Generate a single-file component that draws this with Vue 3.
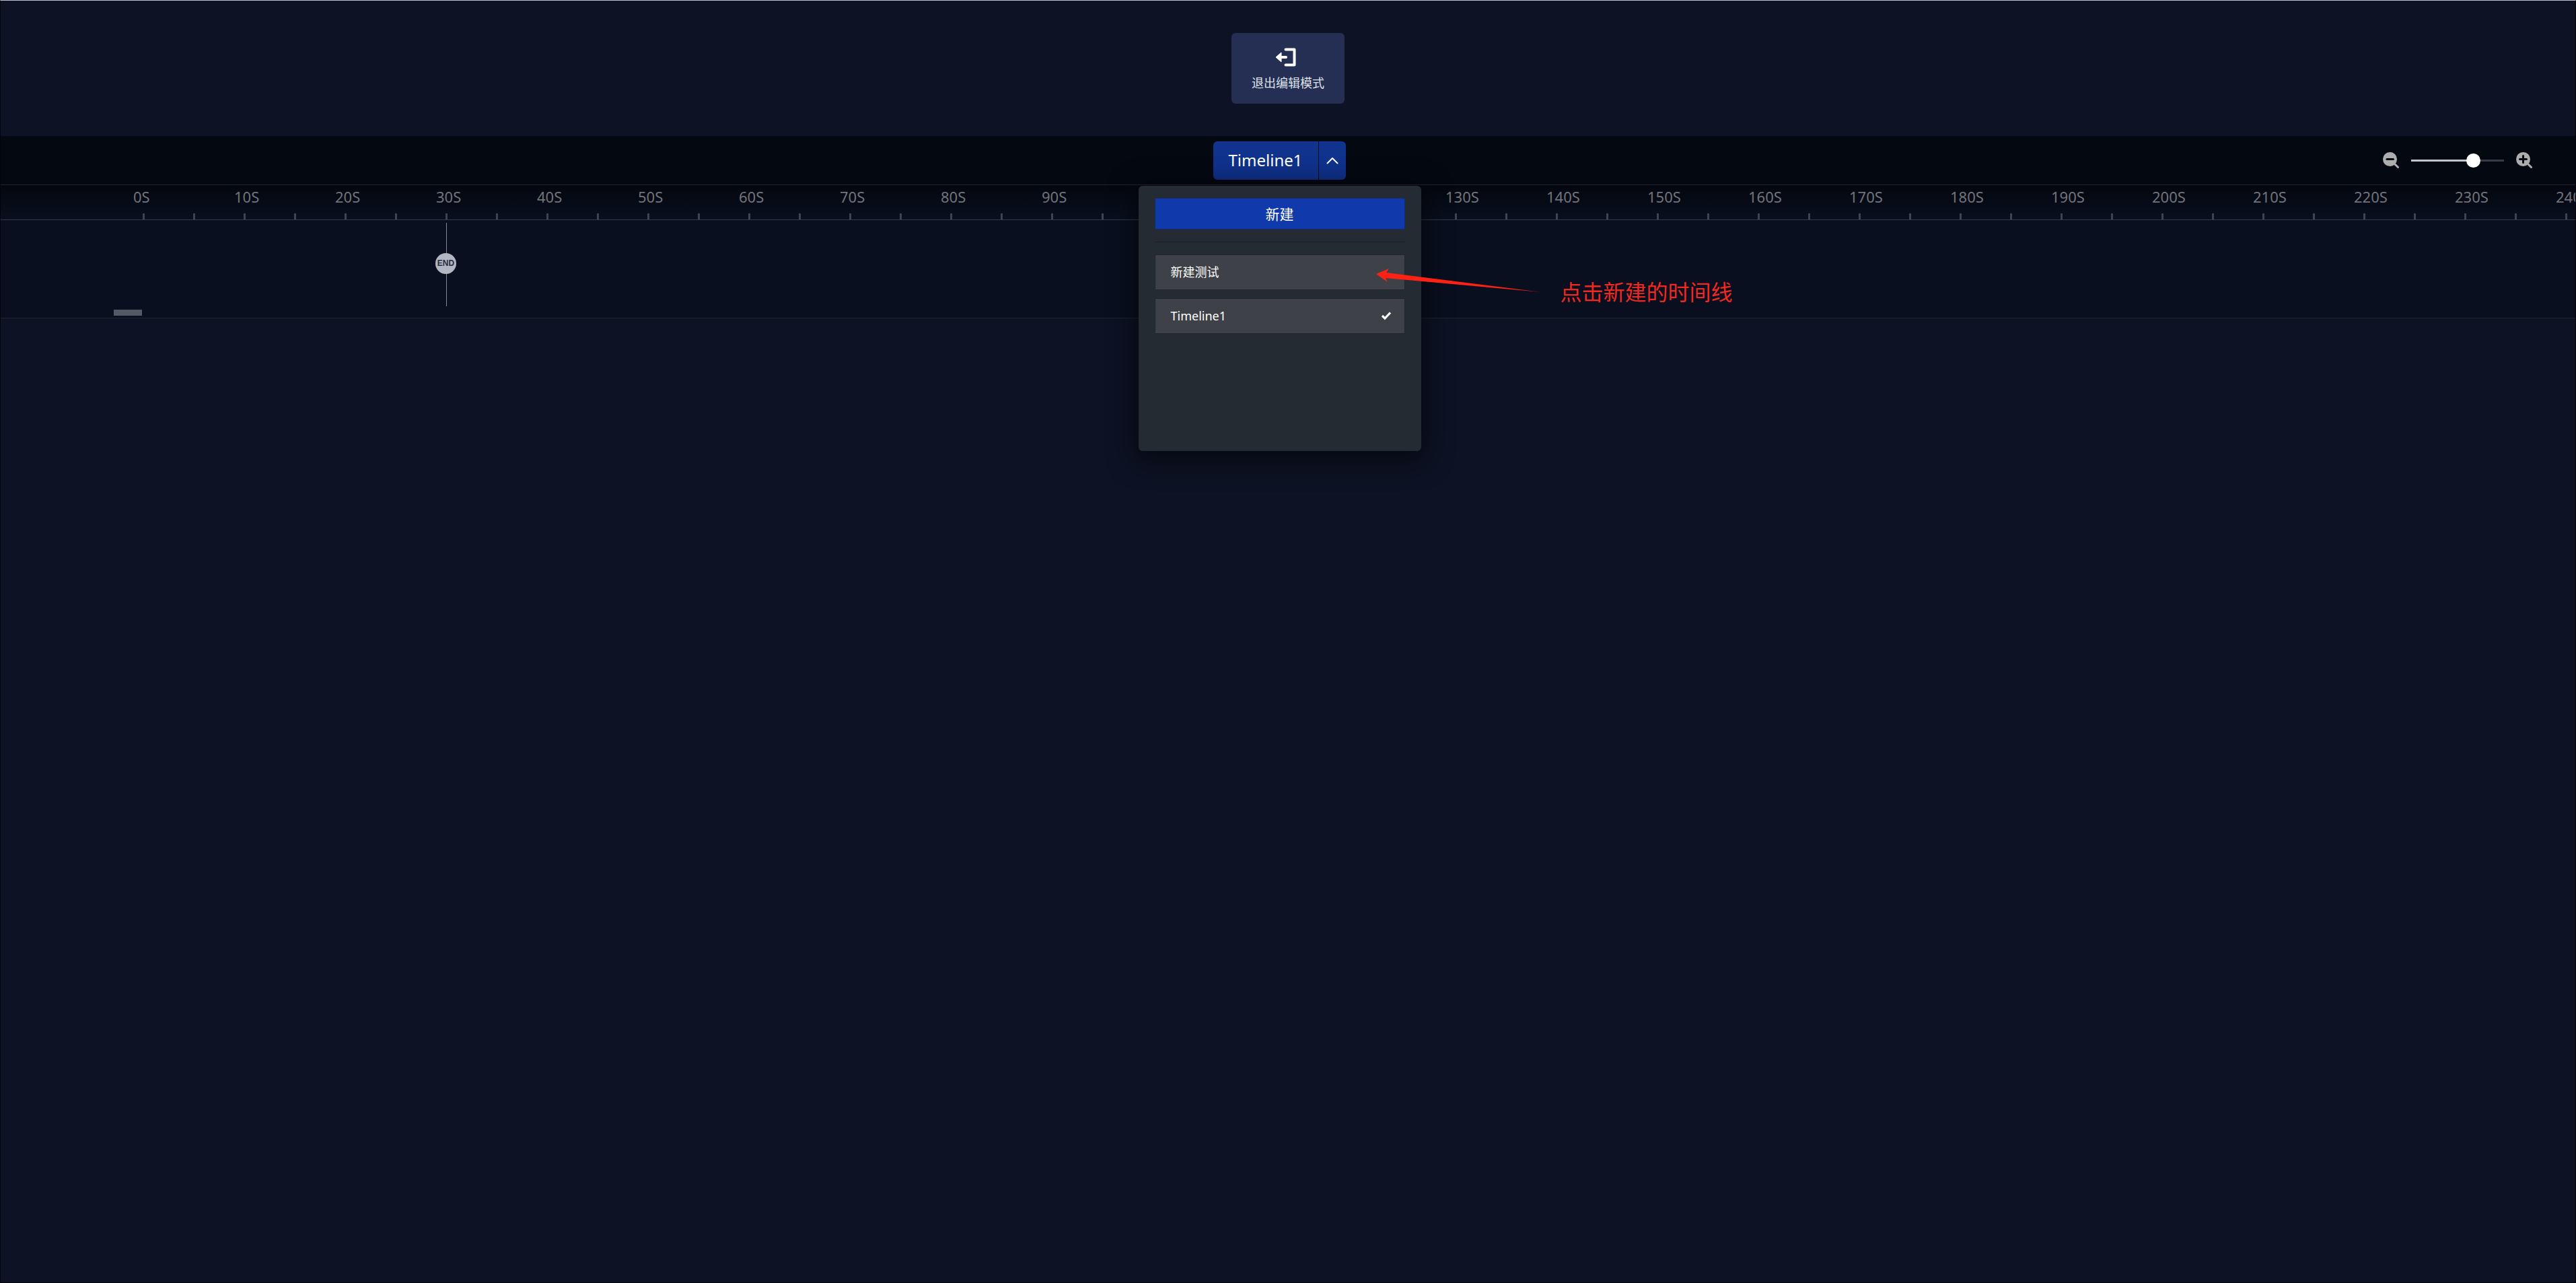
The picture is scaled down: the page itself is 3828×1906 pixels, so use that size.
<script setup>
import { ref } from 'vue'

const SECOND_WIDTH = 15
const zoom = ref(70)
const open = ref(true)
const marks = Array.from({ length: 25 }, (_, i) => i * 10)
const timelines = ['新建测试', 'Timeline1']
const current = ref('Timeline1')
const endTime = 30
</script>

<template>
  <div class="page">
    <header class="header">
      <button type="button" class="exit">
        <svg width="32" height="30" viewBox="0 0 32 30" fill="none" aria-hidden="true">
          <path d="M15.500 3.500H28.500V26.500H15.500" stroke="#fff" stroke-width="4" stroke-linecap="round" stroke-linejoin="round" />
          <path d="M9 15H16" stroke="#fff" stroke-width="4" stroke-linecap="round" />
          <path d="M1 15L9 8V22Z" fill="#fff" stroke="#fff" stroke-linejoin="round" />
        </svg>
        <span>退出编辑模式</span>
      </button>
    </header>

    <section class="toolbar">
      <div class="picker">
        <button type="button" class="name">{{ current }}</button>
        <button type="button" class="toggle" aria-label="Timelines" :aria-expanded="open" @click="open = !open">
          <svg width="18" height="11" viewBox="0 0 18 11" fill="none" aria-hidden="true">
            <path d="M1.500 9.500L9 2L16.500 9.500" stroke="#fff" stroke-width="2" stroke-linecap="round" stroke-linejoin="round" />
          </svg>
        </button>

        <div v-if="open" class="menu">
          <button type="button" class="create">新建</button>
          <hr class="rule" />
          <ul class="list">
            <li v-for="name in timelines" :key="name">
              <button type="button" class="item" @click="current = name">
                <span>{{ name }}</span>
                <svg v-if="name === current" width="16" height="14" viewBox="0 0 16 14" fill="none" aria-hidden="true">
                  <path d="M2 7L6 11L14 2.500" stroke="#fff" stroke-width="3.200" />
                </svg>
              </button>
            </li>
          </ul>
        </div>

        <svg class="arrow" width="256" height="44" viewBox="0 0 256 44" aria-hidden="true">
          <path d="M5 11L24 3L20 9L250 38L19 17L22 23Z" fill="#ff2214" />
        </svg>
        <p class="note">点击新建的时间线</p>
      </div>

      <div class="zoom">
        <button type="button" class="zoom-btn" aria-label="Zoom out">
          <svg width="24" height="24" viewBox="0 0 24 24" fill="none" aria-hidden="true">
            <circle cx="10.500" cy="10.500" r="10.500" fill="#adadad" />
            <path d="M17 17L22.500 22.500" stroke="#adadad" stroke-width="3" stroke-linecap="round" />
            <path d="M6 10.500H15.500" stroke="#050912" stroke-width="3" stroke-linecap="round" />
          </svg>
        </button>
        <input v-model="zoom" class="slider" type="range" min="0" max="100" aria-label="Zoom" />
        <button type="button" class="zoom-btn" aria-label="Zoom in">
          <svg width="24" height="24" viewBox="0 0 24 24" fill="none" aria-hidden="true">
            <circle cx="10.500" cy="10.500" r="10.500" fill="#adadad" />
            <path d="M17 17L22.500 22.500" stroke="#adadad" stroke-width="3" stroke-linecap="round" />
            <path d="M5.500 10.500H15.500M10.500 5.500V15.500" stroke="#050912" stroke-width="3" stroke-linecap="round" />
          </svg>
        </button>
      </div>
    </section>

    <section class="ruler">
      <div v-for="s in marks" :key="s" class="mark">
        <span class="label">{{ s }}S</span>
        <div class="ticks"><i></i><i></i></div>
      </div>
    </section>

    <section class="lane">
      <div class="track">
        <div class="end" :style="{ left: endTime * SECOND_WIDTH + 'px' }">
          <span class="badge">END</span>
        </div>
      </div>
      <div class="handle"></div>
    </section>
  </div>
</template>

<style>
body {
  background: #0d1224;
}
</style>

<style scoped>
.page {
  box-sizing: border-box;
  min-height: 100vh;
  overflow: hidden;
  background: #0d1224;
  border: 1px solid #020308;
  border-top-color: #b9c5cc;
  color: #fff;
  font-family: "Noto Sans", "Noto Sans CJK SC", sans-serif;
}

button {
  margin: 0;
  padding: 0;
  border: 0;
  background: none;
  color: inherit;
  font: inherit;
  cursor: pointer;
}

svg {
  display: block;
}

.header {
  display: flex;
  justify-content: center;
  padding: 48px 0;
}

.exit {
  display: flex;
  flex-direction: column;
  align-items: center;
  gap: 11px;
  box-sizing: border-box;
  width: 168px;
  height: 105px;
  padding-top: 21px;
  border-radius: 6px;
  background: #252f54;
  color: #dfe2ea;
  font-size: 18px;
  line-height: 24px;
}

.exit svg {
  margin-right: 6px;
}

.toolbar {
  display: grid;
  grid-template-columns: 1fr auto 1fr;
  align-items: center;
  height: 72px;
  padding: 0 64px 0 38px;
  background: #040810;
  border-bottom: 1px solid #22252e;
}

.picker {
  position: relative;
  z-index: 1;
  grid-column: 2;
  display: flex;
  gap: 1px;
  height: 57px;
}

.name,
.toggle {
  background: linear-gradient(#10348f, #0f3088);
}

.name {
  width: 156px;
  border-radius: 6px 0 0 6px;
  font-size: 24px;
  line-height: 32px;
}

.toggle {
  display: flex;
  align-items: center;
  justify-content: center;
  width: 40px;
  border-radius: 0 6px 6px 0;
}

.menu {
  position: absolute;
  top: 66px;
  left: -111px;
  box-sizing: border-box;
  width: 420px;
  min-height: 394px;
  padding: 18px 24px;
  border-radius: 6px;
  background: #252b33;
  box-shadow: 0 8px 40px 4px rgba(0, 0, 0, 0.6);
}

.create {
  display: block;
  box-sizing: border-box;
  width: 100%;
  height: 47px;
  padding-top: 2px;
  border: 1px solid #182a66;
  background: #103aac;
  font-size: 21px;
  line-height: 28px;
}

.rule {
  height: 1px;
  margin: 18px 0;
  border: 0;
  background: #1b1e27;
}

.list {
  display: flex;
  flex-direction: column;
  gap: 12px;
  margin: 0;
  padding: 0;
  list-style: none;
}

.item {
  display: flex;
  align-items: center;
  justify-content: space-between;
  box-sizing: border-box;
  width: 100%;
  height: 53px;
  padding: 0 19px 0 23px;
  border: 1px solid #22262b;
  background: #3e4147;
  font-size: 18px;
  line-height: 24px;
}

.arrow {
  position: absolute;
  top: 186px;
  left: 237px;
}

.note {
  position: absolute;
  top: 200px;
  left: 516px;
  margin: 0;
  color: #f0281f;
  font-size: 32px;
  line-height: 48px;
  white-space: nowrap;
}

.zoom {
  display: flex;
  align-items: center;
  justify-self: end;
  gap: 18px;
}

.slider {
  width: 138px;
  height: 21px;
  margin: 0;
  appearance: none;
  background: linear-gradient(90deg, #c4c5cb 70%, #393c48 70%) center / 100% 3px no-repeat;
}

.slider::-webkit-slider-thumb {
  width: 21px;
  height: 21px;
  appearance: none;
  border-radius: 50%;
  background: #fff;
}

.ruler {
  display: flex;
  height: 51px;
  padding-left: 197px;
  overflow: hidden;
  background: linear-gradient(#04070f, #090f1f);
  border-bottom: 1px solid #373a46;
}

.mark {
  display: flex;
  flex: none;
  flex-direction: column;
  justify-content: space-between;
  width: 150px;
}

.label {
  padding-top: 2px;
  color: #72747b;
  font-size: 22px;
  line-height: 30px;
}

.ticks {
  display: flex;
  gap: 72px;
  padding-left: 14px;
}

.ticks i {
  width: 3px;
  height: 9px;
  background: #41444f;
}

.lane {
  display: flex;
  flex-direction: column;
  gap: 5px;
  padding: 4px 0 3px;
  background: #090f1f;
  border-bottom: 1px solid #202432;
}

.track {
  position: relative;
  height: 124px;
  margin-left: 212px;
}

.end {
  position: absolute;
  top: 0;
  display: flex;
  align-items: center;
  width: 1px;
  height: 100%;
  background: #868a96;
}

.badge {
  flex: none;
  width: 31px;
  margin: 0 0 3px -16px;
  border-radius: 50%;
  background: #b2b6c3;
  color: #262c3c;
  font-family: "Liberation Sans", sans-serif;
  font-size: 12px;
  font-weight: 700;
  line-height: 31px;
  text-align: center;
}

.handle {
  width: 42px;
  height: 9px;
  margin-left: 168px;
  background: #555965;
}
</style>
